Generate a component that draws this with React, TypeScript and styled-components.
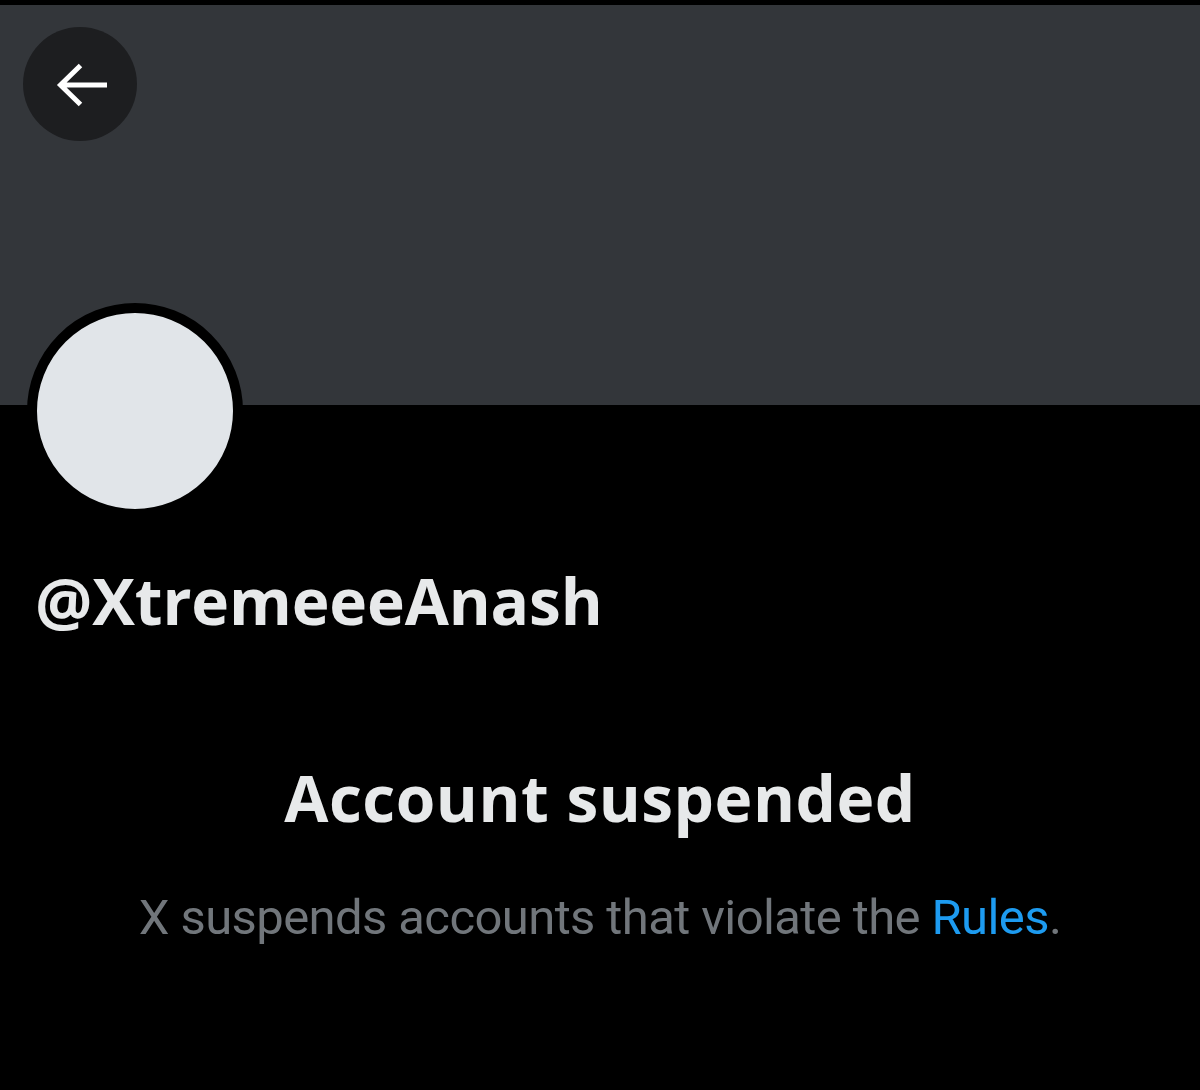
import styled, { createGlobalStyle } from "styled-components";

const GlobalStyle = createGlobalStyle`
  html, body {
    margin: 0;
    padding: 0;
    background: #000;
  }
  body {
    font-family: Roboto, "Noto Sans", "Liberation Sans", sans-serif;
    -webkit-font-smoothing: antialiased;
  }
`

const Page = styled.div`
  width: 1200px;
  height: 1090px;
  background: #000;
  padding-top: 5px;
  box-sizing: border-box;
  overflow: hidden;
`

const Banner = styled.div`
  height: 400px;
  background: #33363a;
  padding: 22px 0 0 23px;
  box-sizing: border-box;
`

const BackButton = styled.button`
  width: 114px;
  height: 114px;
  border-radius: 50%;
  border: none;
  background: #1d1e20;
  display: block;
  padding: 0;
  cursor: pointer;
`

const Profile = styled.div`
  padding: 0 0 0 27px;
`

const Avatar = styled.div`
  width: 196px;
  height: 196px;
  margin-top: -102px;
  border-radius: 50%;
  border: 10px solid #000;
  background: #e1e5e9;
`

const Handle = styled.div`
  margin: 46px 0 0 8px;
  color: #e7e9ea;
  font-family: "Open Sans", Roboto, sans-serif;
  font-size: 64px;
  font-weight: 700;
  line-height: 72px;
  letter-spacing: -0.15px;
`

const Notice = styled.div`
  display: flex;
  flex-direction: column;
  align-items: center;
  margin-top: 125px;
`

const Title = styled.h1`
  margin: 0;
  color: #e7e9ea;
  font-family: "Open Sans", Roboto, sans-serif;
  font-size: 64px;
  font-weight: 700;
  line-height: 72px;
  letter-spacing: 0.5px;
`

const Subtitle = styled.p`
  margin: 55px 0 0;
  color: #71767b;
  font-size: 49px;
  font-weight: 400;
  line-height: 58px;
  letter-spacing: -0.6px;
`

const RulesLink = styled.a`
  color: #1d9bf0;
  text-decoration: none;
`

export default function App() {
  return (
    <>
      <GlobalStyle />
      <Page>
        <Banner>
          <BackButton aria-label="Back">
            <svg width="114" height="114" viewBox="0 0 114 114" fill="none">
              <path
                d="M84 58H37M57.5 38.5L37.5 58l20 19.5"
                stroke="#fff"
                strokeWidth="5"
                strokeLinecap="butt"
                strokeLinejoin="miter"
              />
            </svg>
          </BackButton>
        </Banner>
        <Profile>
          <Avatar />
          <Handle>@XtremeeeAnash</Handle>
        </Profile>
        <Notice>
          <Title>Account suspended</Title>
          <Subtitle>
            X suspends accounts that violate the <RulesLink href="#">Rules</RulesLink>.
          </Subtitle>
        </Notice>
      </Page>
    </>
  );
}
